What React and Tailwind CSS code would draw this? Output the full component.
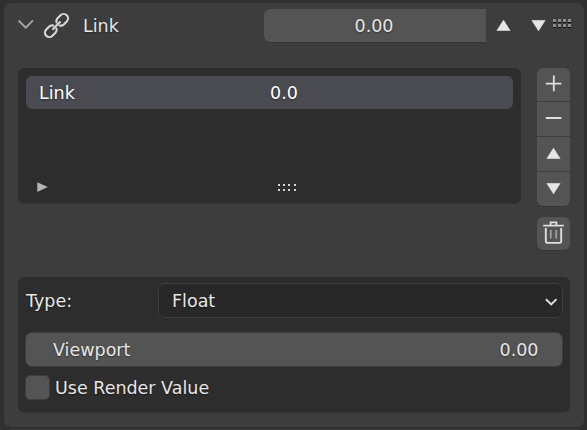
import React from "react";

const label = "whitespace-nowrap [text-shadow:0px_1px_2px_rgba(0,0,0,0.45)]";

function Triangle({ down = false }) {
  return (
    <svg width="15" height="13" viewBox="0 0 15 13" className={down ? "rotate-180" : ""}>
      <path d="M7.5 1.2 14.1 11.5H.9Z" fill="#e6e6e6" stroke="#e6e6e6" strokeWidth=".6" strokeLinejoin="round" />
    </svg>
  );
}

function Grip() {
  return (
    <svg width="18" height="10" viewBox="0 0 18 10" shapeRendering="crispEdges">
      {[0, 5, 10, 15].map((x) =>
        [0, 5].map((y) => (
          <g key={x + "-" + y}>
            <rect x={x} y={y} width="3" height="3" fill="#8c8c8c" />
            <rect x={x} y={y + 3} width="3" height="1" fill="#111111" />
          </g>
        ))
      )}
    </svg>
  );
}

function Header() {
  return (
    <div className="flex h-[33px] items-center">
      <svg width="18" height="12" viewBox="0 0 18 12" className="ml-[13px] -mt-[3px]">
        <path d="M1.5 2.5 8.7 9.7 15.9 2.5" fill="none" stroke="#a6a6a6" strokeWidth="1.8" />
      </svg>
      <svg width="27" height="27" viewBox="0 0 27 27" className="ml-[8px]">
        <g transform="rotate(-45 13.5 13.5)" fill="none" stroke="#d9d9d9" strokeWidth="2.1" strokeLinecap="round">
          <path d="M11.3 15.7A4.4 4.4 0 0 1 7.6 17.9H3.4A4.4 4.4 0 0 1 3.4 9.1H7.6A4.4 4.4 0 0 1 11.3 11.3" />
          <path d="M15.7 11.3A4.4 4.4 0 0 1 19.4 9.1H23.6A4.4 4.4 0 0 1 23.6 17.9H19.4A4.4 4.4 0 0 1 15.7 15.7" />
          <path d="M8.6 13.5H18.4" />
        </g>
      </svg>
      <span className={label + " ml-[13px] w-[181px]"}>Link</span>
      <div className="flex h-[33px] w-[222px] items-center justify-center rounded-l-[6px] bg-[#545454] pr-[2px] shadow-[0_1px_0_#353535]">
        <span className={label}>0.00</span>
      </div>
      <div className="ml-[10px] flex items-center">
        <div className="-mt-px"><Triangle /></div>
        <div className="-mt-px ml-[20px]"><Triangle down /></div>
        <div className="-mt-[4px] ml-[7px] flex"><Grip /></div>
      </div>
    </div>
  );
}

function LinkList() {
  return (
    <div className="flex h-[135px] w-[503px] flex-col justify-between rounded-[6px] bg-[#2d2d2d] px-[8px] pt-[8px] shadow-[0_1px_0_#353535]">
      <div className="flex h-[33px] items-center rounded-[6px] bg-[#4a4b50] pl-[13px] text-white">
        <span className={label + " w-[231px]"}>Link</span>
        <span className={label}>0.0</span>
      </div>
      <div className="flex h-[30px] items-center pb-[2px] pl-[11px]">
        <svg width="12" height="12" viewBox="0 0 12 12">
          <path d="M.3 1.3 10.8 6 .3 10.9Z" fill="#b5b5b5" />
        </svg>
        <svg width="18" height="8" viewBox="0 0 18 8" className="ml-[229px] mt-[2px]" shapeRendering="crispEdges">
          {[0, 5, 10, 16].map((x) => (
            <g key={x} fill="#d5d5d5">
              <rect x={x} y="0" width="2" height="2" />
              <rect x={x} y="5" width="2" height="2" />
            </g>
          ))}
        </svg>
      </div>
    </div>
  );
}

function SideButtons() {
  const cell = "flex items-center justify-center bg-[#545454]";
  return (
    <div className="flex w-[33px] flex-col">
      <div className="flex flex-col gap-px overflow-hidden rounded-[6px] bg-[#3d3d3d] shadow-[0_1px_0_#353535]">
        <button className={cell + " h-[33px]"} aria-label="Add">
          <svg width="17" height="17" viewBox="0 0 17 17" className="-mt-[2px]">
            <path d="M8.8 .6V16.2M.8 8.6H16.4" stroke="#dedede" strokeWidth="1.8" />
          </svg>
        </button>
        <button className={cell + " h-[34px]"} aria-label="Remove">
          <svg width="17" height="4" viewBox="0 0 17 4" className="-mt-[2px]">
            <path d="M.8 2H16.4" stroke="#dedede" strokeWidth="2" />
          </svg>
        </button>
        <button className={cell + " h-[34px] pb-px"} aria-label="Move up"><Triangle /></button>
        <button className={cell + " h-[34px] pb-px"} aria-label="Move down"><Triangle down /></button>
      </div>
      <button className={cell + " mt-[11px] h-[33px] rounded-[6px] shadow-[0_1px_0_#353535]"} aria-label="Delete">
        <svg width="21" height="23" viewBox="0 0 21 23" className="-mt-[2px]" fill="none" stroke="#dedede">
          <path d="M.2 4.6H20.8M7.6 4.4V1.4H13.4V4.4" strokeWidth="1.8" />
          <path d="M2.8 7V19.7Q2.8 21.9 5 21.9H16Q18.2 21.9 18.2 19.7V7" strokeWidth="1.9" />
          <path d="M7.8 9V17.5M13.2 9V17.5" stroke="#a0a0a0" strokeWidth="1.7" />
        </svg>
      </button>
    </div>
  );
}

function Settings() {
  return (
    <div className="mt-[27px] flex h-[135px] w-[552px] flex-col rounded-[6px] bg-[#2d2d2d] px-[7px] pt-[6px] shadow-[0_1px_0_#353535]">
      <div className="flex h-[35px] items-center">
        <span className={label + " w-[133px] pl-px"}>Type:</span>
        <div className="flex h-[35px] w-[405px] items-center justify-between rounded-[7px] border border-[#3d3d3d] bg-[#282828] pl-[13px] pr-[5px]">
          <span className={label}>Float</span>
          <svg width="12" height="8" viewBox="0 0 12 8" className="mt-[3px]">
            <path d="M.9 1.2 6.2 6.4 11.5 1.2" fill="none" stroke="#e0e0e0" strokeWidth="1.9" />
          </svg>
        </div>
      </div>
      <div className="mt-[14px] flex h-[35px] w-[538px] items-center justify-between rounded-[7px] border border-[#3d3d3d] bg-[#545454] pl-[27px] pr-[23.5px]">
        <span className={label}>Viewport</span>
        <span className={label}>0.00</span>
      </div>
      <div className="mt-[8px] flex h-[25px] items-center">
        <div className="h-[25px] w-[25px] rounded-[5px] border border-[#3d3d3d] bg-[#545454]" />
        <span className={label + " ml-[5px]"}>Use Render Value</span>
      </div>
    </div>
  );
}

export default function App() {
  return (
    <div className="flex h-[430px] w-[587px] flex-col overflow-hidden bg-[#303030] pl-[4px] pt-[3px] font-['DejaVu_Sans',sans-serif] text-[17.5px] leading-[22px] text-[#e6e6e6]">
      <div className="h-[424px] w-[580px] shrink-0 rounded-[7px] bg-[#3d3d3d] pt-[6px]">
        <Header />
        <div className="ml-[14px] mt-[26px] flex gap-[16px]">
          <LinkList />
          <SideButtons />
        </div>
        <div className="ml-[14px]"><Settings /></div>
      </div>
      <div className="mt-[2px] h-[8px] w-[580px] shrink-0 rounded-t-[7px] bg-[#3d3d3d]" />
    </div>
  );
}
